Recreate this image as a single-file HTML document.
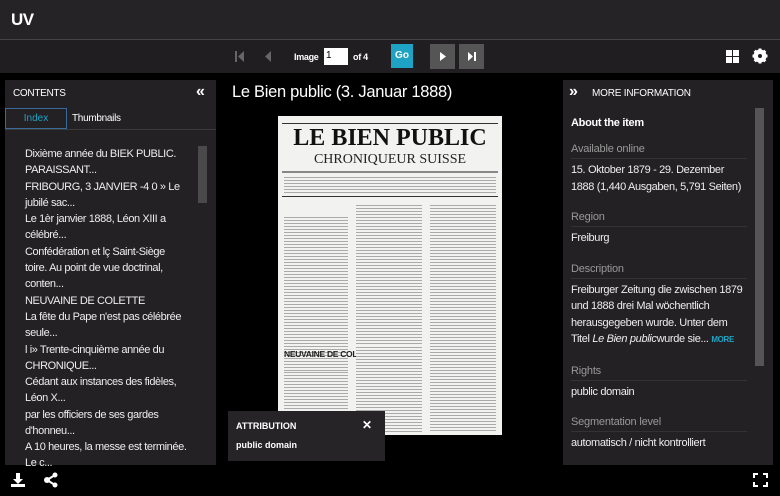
<!DOCTYPE html>
<html><head><meta charset="utf-8"><style>
*{margin:0;padding:0;box-sizing:border-box}
body{width:780px;height:496px;background:#000;font-family:"Liberation Sans",sans-serif;color:#fff;position:relative;overflow:hidden}
.hdr{position:absolute;left:0;top:0;width:780px;height:40px;background:#252325;border-bottom:1px solid #444}
.hdr b{position:absolute;left:11px;top:10px;font-size:17px;font-weight:bold;letter-spacing:-0.5px}
.tb{position:absolute;left:0;top:40px;width:780px;height:33px;background:#201e20}
.abs{position:absolute}
.lp{position:absolute;left:5px;top:80px;width:211px;height:385px;background:#232123}
.rp{position:absolute;left:563px;top:80px;width:210px;height:385px;background:#232123}
.item{font-size:11px;line-height:16px;color:#eee;margin-bottom:0.5px;letter-spacing:-0.4px;white-space:nowrap}
.lbl{font-size:11px;color:#999;border-bottom:1px solid #333;padding-bottom:3px;width:176px;letter-spacing:-0.2px}
.val{font-size:11px;color:#eee;line-height:16.5px;margin-top:3px;width:172px;letter-spacing:-0.35px}
.paper{position:absolute;left:278px;top:116px;width:224px;height:319px;background:#f2f2f0;overflow:hidden}
.col{position:absolute;background:repeating-linear-gradient(#f2f2f0 0 1px,#aaa 1px 2px,#f2f2f0 2px 3px)}
</style></head><body>
<div class="hdr"><b>UV</b></div>
<div class="tb">
 <svg class="abs" style="left:234px;top:10px" width="12" height="13"><rect x="1" y="1" width="2" height="11" fill="#666"/><path d="M10 1 L4 6.5 L10 12Z" fill="#666"/></svg>
 <svg class="abs" style="left:263px;top:10px" width="10" height="13"><path d="M8 1 L2 6.5 L8 12Z" fill="#666"/></svg>
 <span class="abs" style="left:294px;top:12px;font-size:9px;font-weight:bold;letter-spacing:-0.3px">Image</span>
 <div class="abs" style="left:324px;top:8px;width:24px;height:17px;background:#fff;color:#000;font-size:10px;padding:2px 2px">1</div>
 <span class="abs" style="left:353px;top:12px;font-size:9px;font-weight:bold;letter-spacing:-0.3px">of 4</span>
 <div class="abs" style="left:391px;top:4px;width:22px;height:24px;background:#1fa3c4;font-size:10px;font-weight:bold;text-align:center;line-height:24px">Go</div>
 <div class="abs" style="left:430px;top:4px;width:25px;height:25px;background:#555"><svg width="25" height="25"><path d="M10 8 L16 12.5 L10 17Z" fill="#fff"/></svg></div>
 <div class="abs" style="left:459px;top:4px;width:25px;height:25px;background:#555"><svg width="25" height="25"><path d="M9 8 L14 12.5 L9 17Z" fill="#fff"/><rect x="15" y="8" width="2" height="9" fill="#fff"/></svg></div>
 <svg class="abs" style="left:726px;top:10px" width="13" height="13"><rect x="0" y="0" width="6" height="6" fill="#fff"/><rect x="7" y="0" width="6" height="6" fill="#fff"/><rect x="0" y="7" width="6" height="6" fill="#fff"/><rect x="7" y="7" width="6" height="6" fill="#fff"/></svg>
 <svg class="abs" style="left:752px;top:8px" width="16" height="16" viewBox="0 0 16 16"><circle cx="8" cy="8" r="5" fill="none" stroke="#fff" stroke-width="3"/><g stroke="#fff" stroke-width="3"><line x1="8" y1="0.5" x2="8" y2="15.5"/><line x1="0.5" y1="8" x2="15.5" y2="8"/><line x1="2.7" y1="2.7" x2="13.3" y2="13.3"/><line x1="13.3" y1="2.7" x2="2.7" y2="13.3"/></g><circle cx="8" cy="8" r="2" fill="#201e20"/></svg>
</div>

<div class="lp">
 <div class="abs" style="left:8px;top:8px;font-size:10px;letter-spacing:-0.3px">CONTENTS</div>
 <div class="abs" style="left:191px;top:3px;font-size:16px;font-weight:bold">«</div>
 <div class="abs" style="left:0;top:28px;width:62px;height:21px;border:1px solid #3a6a9a;color:#1fa3c4;font-size:10px;text-align:center;line-height:19px">Index</div>
 <div class="abs" style="left:67px;top:33px;font-size:10px;letter-spacing:-0.3px">Thumbnails</div>
 <div class="abs" style="left:0;top:49px;width:211px;border-top:1px solid #3a3a3a"></div>
 <div class="abs" style="left:193px;top:66px;width:9px;height:57px;background:#4a4a4a"></div>
 <div class="abs" style="left:20px;top:66px;width:172px">
  <div class="item">Dixième année du BIEK PUBLIC.<br>PARAISSANT...</div>
  <div class="item">FRIBOURG, 3 JANVIER -4 0 » Le<br>jubilé sac...</div>
  <div class="item">Le 1èr janvier 1888, Léon XIII a<br>célébré...</div>
  <div class="item">Confédération et lç Saint-Siège</div>
  <div class="item">toire. Au point de vue doctrinal,<br>conten...</div>
  <div class="item">NEUVAINE DE COLETTE</div>
  <div class="item">La fête du Pape n'est pas célébrée<br>seule...</div>
  <div class="item">l i» Trente-cinquième année du<br>CHRONIQUE...</div>
  <div class="item">Cédant aux instances des fidèles,<br>Léon X...</div>
  <div class="item">par les officiers de ses gardes<br>d'honneu...</div>
  <div class="item">A 10 heures, la messe est terminée.<br>Le c...</div>
 </div>
</div>

<div class="abs" style="left:232px;top:83px;font-size:16.5px;color:#fff;letter-spacing:-0.3px">Le Bien public (3. Januar 1888)</div>

<div class="paper">
 <div class="abs" style="left:4px;top:7px;width:216px;border-top:1px solid #333"></div>
 <div class="abs" style="left:0;top:8px;width:224px;text-align:center;font-family:'Liberation Serif',serif;font-weight:900;font-size:24px;color:#111;white-space:nowrap;line-height:28px">LE BIEN PUBLIC</div>
 <div class="abs" style="left:0;top:36px;width:224px;text-align:center;font-family:'Liberation Serif',serif;font-size:14px;color:#222;white-space:nowrap">CHRONIQUEUR SUISSE</div>
 <div class="abs" style="left:4px;top:55px;width:216px;height:2px;background:#888"></div>
 <div class="col" style="left:6px;top:60px;width:212px;height:18px"></div>
 <div class="abs" style="left:4px;top:80px;width:216px;border-top:1px solid #333"></div>
 <div class="col" style="left:6px;top:100px;width:64px;height:180px"></div>
 <div class="col" style="left:78px;top:88px;width:66px;height:210px"></div>
 <div class="col" style="left:152px;top:88px;width:66px;height:228px"></div>
 <div class="abs" style="left:6px;top:233px;font-size:8.5px;font-weight:bold;color:#222;white-space:nowrap;letter-spacing:-0.3px">NEUVAINE DE COLETTE</div>
 <div class="col" style="left:6px;top:255px;width:64px;height:60px"></div>
 <div class="col" style="left:78px;top:230px;width:66px;height:86px"></div>
</div>

<div class="abs" style="left:228px;top:411px;width:157px;height:50px;background:#262426">
 <div class="abs" style="left:8px;top:10px;font-size:9px;font-weight:bold">ATTRIBUTION</div>
 <div class="abs" style="left:134px;top:7px;font-size:12px;font-weight:bold">✕</div>
 <div class="abs" style="left:8px;top:29px;font-size:9px;font-weight:bold">public domain</div>
</div>

<div class="rp">
 <div class="abs" style="left:6px;top:3px;font-size:16px;font-weight:bold">»</div>
 <div class="abs" style="left:29px;top:8px;font-size:10px;letter-spacing:-0.2px">MORE INFORMATION</div>
 <div class="abs" style="left:192px;top:28px;width:9px;height:258px;background:#555"></div>
 <div class="abs" style="left:8px;top:37px;font-size:11px;font-weight:bold;letter-spacing:-0.3px">About the item</div>
 <div class="abs" style="left:8px;top:63px">
  <div class="lbl">Available online</div>
  <div class="val">15. Oktober 1879 - 29. Dezember 1888 (1,440 Ausgaben, 5,791 Seiten)</div>
  <div class="lbl" style="margin-top:16px">Region</div>
  <div class="val">Freiburg</div>
  <div class="lbl" style="margin-top:16px">Description</div>
  <div class="val">Freiburger Zeitung die zwischen 1879 und 1888 drei Mal wöchentlich herausgegeben wurde. Unter dem Titel <i>Le Bien public</i>wurde sie... <span style="color:#1fa3c4;font-size:8px;font-weight:bold">MORE</span></div>
  <div class="lbl" style="margin-top:16px">Rights</div>
  <div class="val">public domain</div>
  <div class="lbl" style="margin-top:16px">Segmentation level</div>
  <div class="val">automatisch / nicht kontrolliert</div>
 </div>
</div>

<svg class="abs" style="left:10px;top:472px" width="16" height="16"><path d="M6 1h4v6h3l-5 5-5-5h3z" fill="#fff"/><rect x="1" y="12" width="14" height="3" fill="#fff"/></svg>
<svg class="abs" style="left:43px;top:472px" width="16" height="16"><line x1="4" y1="8" x2="12" y2="3" stroke="#fff" stroke-width="2"/><line x1="4" y1="8" x2="12" y2="13" stroke="#fff" stroke-width="2"/><circle cx="4" cy="8" r="3" fill="#fff"/><circle cx="12" cy="3" r="2.5" fill="#fff"/><circle cx="12" cy="13" r="2.5" fill="#fff"/></svg>
<svg class="abs" style="left:753px;top:473px" width="15" height="14"><path d="M1 5V1h4M10 1h4v4M14 9v4h-4M5 13H1V9" fill="none" stroke="#fff" stroke-width="2"/></svg>
</body></html>
